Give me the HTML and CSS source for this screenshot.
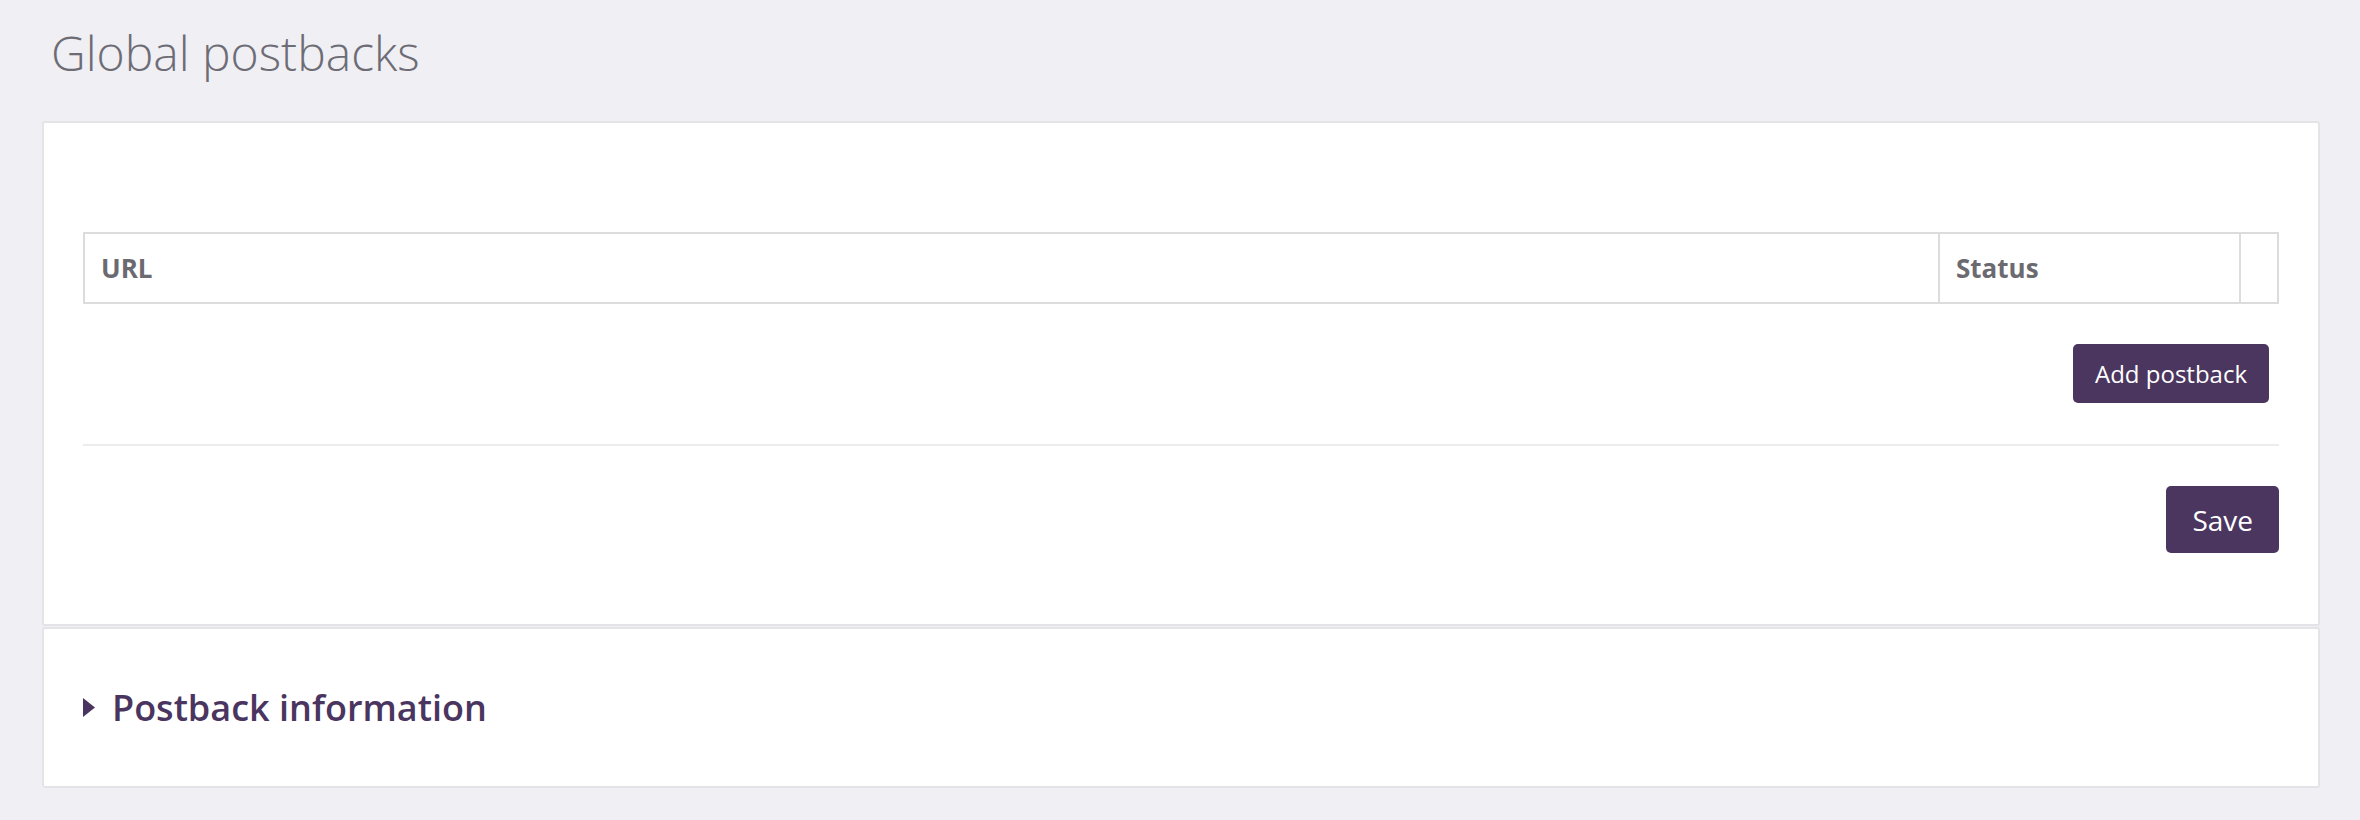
FILE: index.html
```html
<!DOCTYPE html>
<html lang="en">
<head>
<meta charset="utf-8">
<title>Global postbacks</title>
<link rel="stylesheet" href="styles.css">
</head>
<body>
<div class="page">
  <h1 class="page-title">Global postbacks</h1>
  <section class="card card-main">
    <table class="postback-table">
      <thead>
        <tr>
          <th class="col-url">URL</th>
          <th class="col-status">Status</th>
          <th class="col-actions"></th>
        </tr>
      </thead>
    </table>
    <div class="add-row">
      <button class="btn btn-add" type="button">Add postback</button>
    </div>
    <hr class="divider">
    <div class="save-row">
      <button class="btn btn-save" type="button">Save</button>
    </div>
  </section>
  <section class="card card-info">
    <div class="info-toggle">
      <svg class="caret" width="12" height="19" viewBox="0 0 12 19" aria-hidden="true"><polygon points="0,0 12,9.5 0,19" fill="#4a3560"/></svg>
      <span class="info-title">Postback information</span>
    </div>
  </section>
</div>
</body>
</html>
```
FILE: styles.css
```css
html, body {
  margin: 0;
  padding: 0;
}
body {
  background: #efeff4;
  font-family: "Open Sans", "Noto Sans", sans-serif;
  color: #6b6a70;
}
.page {
  padding: 20px 40px 0 42px;
}
.page-title {
  margin: 0 0 36px 0;
  padding-left: 9px;
  font-size: 48px;
  font-weight: 300;
  line-height: 65px;
  color: #6d6c75;
}
.card {
  background: #fff;
  border: 2px solid #e4e4e8;
  border-radius: 3px;
}
.card-main {
  padding: 109px 39px 71px 39px;
}
.card-info {
  margin-top: 1px;
  padding: 54px 39px 54px 39px;
}
.postback-table {
  width: 100%;
  border-collapse: separate;
  border-spacing: 0;
  border: 2px solid #dcdcdc;
}
.postback-table th {
  box-sizing: border-box;
  height: 68px;
  padding: 0 16px;
  text-align: left;
  vertical-align: middle;
  font-size: 26px;
  font-weight: 700;
  color: #6b6a70;
}
.postback-table .col-status {
  width: 301px;
  border-left: 2px solid #dcdcdc;
}
.postback-table .col-actions {
  width: 38px;
  padding: 0;
  border-left: 2px solid #dcdcdc;
}
.add-row {
  display: flex;
  justify-content: flex-end;
  margin-top: 40px;
  padding-right: 10px;
}
.save-row {
  display: flex;
  justify-content: flex-end;
  margin-top: 40px;
}
.btn {
  border: none;
  border-radius: 5px;
  background: #4b3660;
  color: #fff;
  font-family: "Open Sans", "Noto Sans", sans-serif;
  cursor: pointer;
}
.btn-add {
  height: 59px;
  padding: 0 22px;
  font-size: 24px;
}
.btn-save {
  height: 67px;
  padding: 0 26px;
  font-size: 28px;
}
.divider {
  margin: 41px 0 0 0;
  border: none;
  height: 2px;
  background: #ececec;
}
.info-toggle {
  display: flex;
  align-items: center;
  gap: 17px;
  line-height: 49px;
}
.caret {
  display: block;
  flex: none;
}
.info-title {
  font-size: 36px;
  font-weight: 600;
  color: #4a3560;
}
```
